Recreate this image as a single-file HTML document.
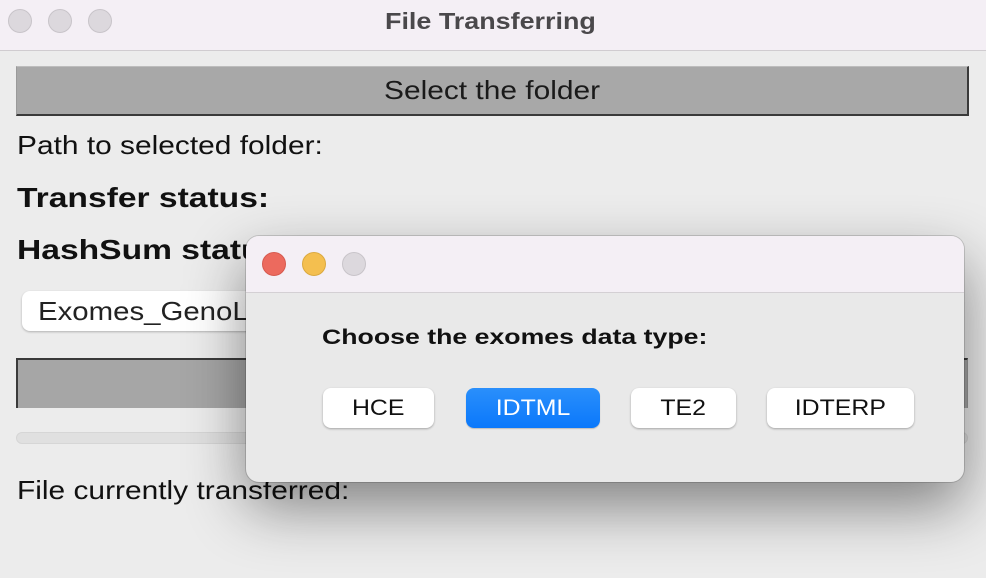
<!DOCTYPE html>
<html><head><style>
*{margin:0;padding:0;box-sizing:border-box}
body{width:986px;height:578px;overflow:hidden;background:#ececec;font-family:"Liberation Sans",Arial,sans-serif;position:relative;color:#000}
.abs{position:absolute}
.sx{display:inline-block;transform-origin:left center;white-space:nowrap}
.tb{left:0;top:0;width:986px;height:51px;background:#f4eff5;border-bottom:1px solid #d0ccd0}
.dot{width:24px;height:24px;border-radius:50%;background:#dcd8dd;border:1px solid #c8c4c9}
.title{left:385px;top:8px;font-weight:bold;font-size:23px;color:#4a484b;transform:scaleX(1.17)}
.btn{left:16px;top:66px;width:953px;height:50px;background:#a8a8a8;border-top:1px solid #bdbdbd;border-left:1px solid #9a9a9a;border-right:2px solid #3a3a3a;border-bottom:2px solid #3a3a3a;font-size:26px;line-height:46px;color:#1a1a1a}
.lbl{left:17px;font-size:26px;color:#111}
.b{font-weight:bold;font-size:28px}
.combo{left:22px;top:291px;width:240px;height:40px;background:#fff;border-radius:8px;box-shadow:0 1px 2px rgba(0,0,0,.25);font-size:26px;line-height:40px;padding-left:16px;color:#222;overflow:hidden}
.bar2{left:16px;top:358px;width:952px;height:50px;background:#a6a6a6;border-top:2px solid #3a3a3a;border-left:2px solid #3a3a3a;border-right:1px solid #999}
.track{left:16px;top:432px;width:952px;height:12px;border-radius:6px;background:#e0e0e0;border:1px solid #d6d6d6}
.dlg{left:246px;top:236px;width:718px;height:246px;border-radius:13px;background:#e9e9e9;box-shadow:0 25px 60px rgba(0,0,0,.45),0 0 0 1px rgba(0,0,0,.15);overflow:hidden}
.dtb{left:0;top:0;width:718px;height:57px;background:#f4eff5;border-bottom:1px solid #d4d0d4}
.q{left:76px;top:90px;font-weight:bold;font-size:21px;color:#111;transform:scaleX(1.27)}
.ob{top:152px;height:40px;background:#fff;border-radius:8px;box-shadow:0 1px 2px rgba(0,0,0,.3);text-align:center;font-size:22px;line-height:40px;color:#111}
.ob span{display:inline-block;transform:scaleX(1.13)}
.blue{background:linear-gradient(#2a8ffb,#0a78fb);color:#fff;box-shadow:0 1px 1px rgba(0,0,0,.2)}
</style></head><body>
<div class="abs tb"></div>
<div class="abs dot" style="left:8px;top:9px"></div>
<div class="abs dot" style="left:48px;top:9px"></div>
<div class="abs dot" style="left:88px;top:9px"></div>
<div class="abs title sx">File Transferring</div>
<div class="abs btn"><span class="abs sx" style="left:367px;transform:scaleX(1.15)">Select the folder</span></div>
<div class="abs lbl sx" style="top:130px;transform:scaleX(1.15)">Path to selected folder:</div>
<div class="abs lbl b sx" style="top:182px;transform:scaleX(1.2)">Transfer status:</div>
<div class="abs lbl b sx" style="top:234px;transform:scaleX(1.2)">HashSum status:</div>
<div class="abs combo"><span class="sx" style="transform:scaleX(1.13)">Exomes_GenoLab</span></div>
<div class="abs bar2"></div>
<div class="abs track"></div>
<div class="abs lbl sx" style="top:475px;transform:scaleX(1.15)">File currently transferred:</div>
<div class="abs dlg">
 <div class="abs dtb"></div>
 <div class="abs dot" style="left:16px;top:16px;background:#ec6a5e;border-color:#d65a4f"></div>
 <div class="abs dot" style="left:56px;top:16px;background:#f4bf4f;border-color:#dba93f"></div>
 <div class="abs dot" style="left:96px;top:16px"></div>
 <div class="abs q sx">Choose the exomes data type:</div>
 <div class="abs ob" style="left:77px;width:111px"><span>HCE</span></div>
 <div class="abs ob blue" style="left:220px;width:134px"><span>IDTML</span></div>
 <div class="abs ob" style="left:385px;width:105px"><span>TE2</span></div>
 <div class="abs ob" style="left:521px;width:147px"><span>IDTERP</span></div>
</div>
</body></html>
